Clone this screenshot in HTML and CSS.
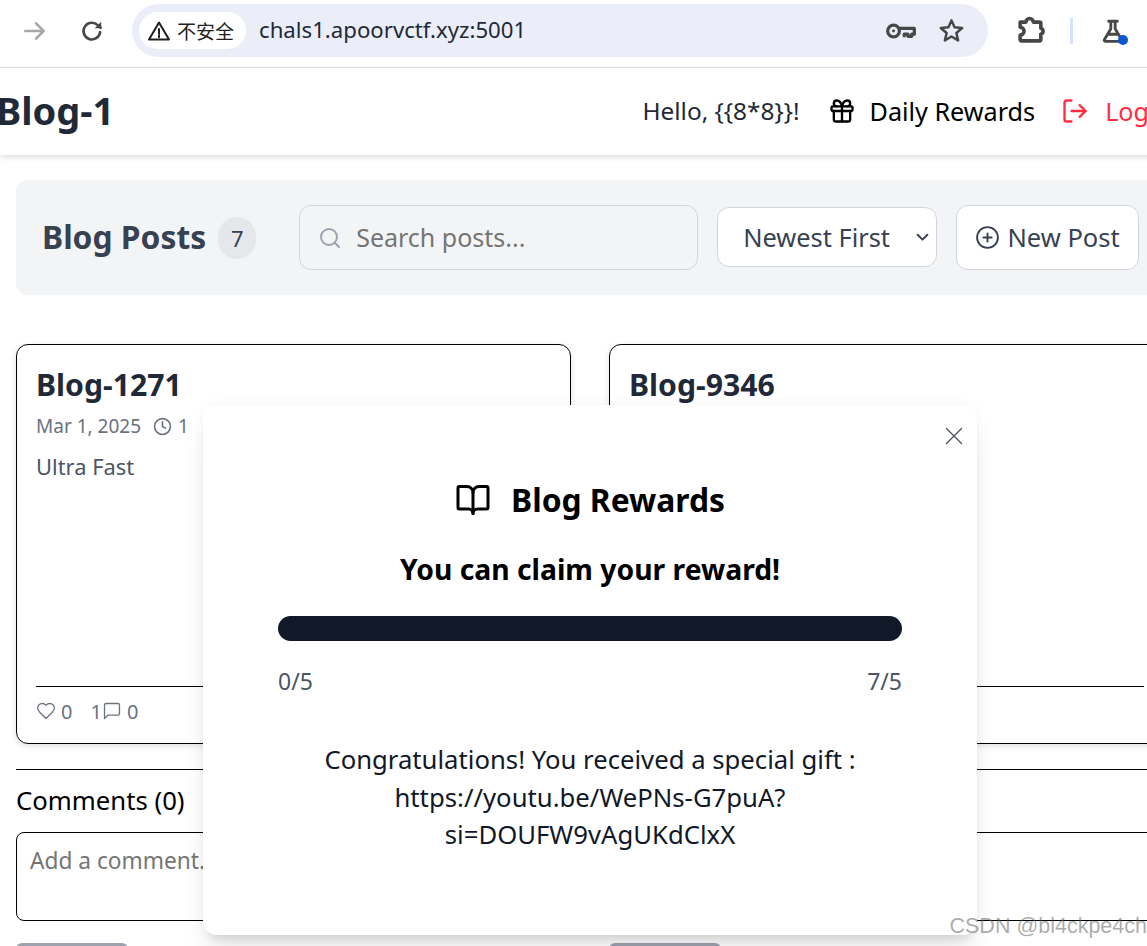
FILE: index.html
```html
<!DOCTYPE html>
<html lang="en">
<head>
  <meta charset="UTF-8" />
  <title>Blog-1</title>
  <link rel="stylesheet" href="styles.css">
</head>
<body>
  <!-- Browser toolbar -->
  <div class="browser-bar">
    <svg class="tool-icon back" viewBox="0 0 24 24"><path d="M3 12h17M13 5l7 7-7 7"/></svg>
    <svg class="tool-icon reload" viewBox="0 0 24 24"><path d="M19.5 13a7.7 7.7 0 1 1-2.2-6.4L20 9"/><path d="M20.5 3.5V9.5H14.5" class="solid"/></svg>
    <div class="omnibox">
      <div class="security-chip">
        <svg class="warn-icon" viewBox="0 0 24 24"><path d="M12 3.5 22 20.5H2Z"/><path d="M12 10v5M12 16.6v1.6"/></svg>
        <span>不安全</span>
      </div>
      <span class="url">chals1.apoorvctf.xyz:5001</span>
      <svg class="tool-icon key" viewBox="0 0 30 24"><circle cx="8" cy="12" r="5.5"/><circle cx="8" cy="12" r="1.4" class="solid"/><path d="M13.5 9.5H27.5V15H25V17H21.5V15H18V16.5"/></svg>
      <svg class="tool-icon star" viewBox="0 0 24 24"><path d="M12 3l2.7 6.2 6.8.6-5.2 4.4 1.6 6.6-5.9-3.5-5.900 3.500 1.600-6.600-5.200-4.400 6.800-.6Z"/></svg>
    </div>
    <svg class="tool-icon puzzle" viewBox="0 0 24 24"><path d="M4 5.500h4.500a2.800 2.800 0 0 1 5.600 0H19a1 1 0 0 1 1 1v3.700a2.400 2.400 0 0 1 0 4.600V19a1 1 0 0 1-1 1H5a1 1 0 0 1-1-1v-3.500a3 3 0 0 0 0-6Z"/></svg>
    <span class="bar-divider"></span>
    <div class="flask-wrap">
      <svg class="tool-icon flask" viewBox="0 0 24 24"><path d="M8 3h8M10 3v7L4 20a1 1 0 0 0 1 1.500h14a1 1 0 0 0 1-1.500L14 10V3M7.500 15h9"/></svg>
      <span class="flask-dot"></span>
    </div>
  </div>

  <div class="page">
    <nav class="navbar">
      <span class="brand">Blog-1</span>
      <div class="nav-links">
        <span class="hello">Hello, {{8*8}}!</span>
        <a class="nav-link"><svg class="icon icon-nav" viewBox="0 0 24 24"><rect x="3" y="8" width="18" height="4" rx="1"/><path d="M12 8v13"/><path d="M19 12v7a2 2 0 0 1-2 2H7a2 2 0 0 1-2-2v-7"/><path d="M7.500 8a2.500 2.500 0 0 1 0-5A4.800 8 0 0 1 12 8a4.800 8 0 0 1 4.500-5 2.500 2.500 0 0 1 0 5"/></svg>Daily Rewards</a>
        <a class="nav-link logout"><svg class="icon icon-nav" viewBox="0 0 24 24"><path d="M9 21H5a2 2 0 0 1-2-2V5a2 2 0 0 1 2-2h4"/><path d="M16 17l5-5-5-5"/><path d="M21 12H9"/></svg>Logout</a>
      </div>
    </nav>

    <main class="content">
      <section class="posts-header">
        <h2>Blog Posts</h2>
        <span class="count-badge">7</span>
        <div class="search-box">
          <svg class="icon icon-search" viewBox="0 0 24 24"><circle cx="11" cy="11" r="8"/><path d="M21 21l-4.300-4.300"/></svg>
          <input type="text" placeholder="Search posts...">
        </div>
        <div class="sort-box">
          <select><option>Newest First</option></select>
          <svg class="sort-arrow" viewBox="0 0 12 8"><path d="M1.500 1.500 6 6l4.500-4.500"/></svg>
        </div>
        <button class="new-post"><svg class="icon icon-plus" viewBox="0 0 24 24"><circle cx="12" cy="12" r="10"/><path d="M8 12h8M12 8v8"/></svg>New Post</button>
      </section>

      <section class="posts-grid">
        <div class="post-col">
          <article class="post-card">
            <h3>Blog-1271</h3>
            <div class="post-meta">Mar 1, 2025 <svg class="icon icon-clock" viewBox="0 0 24 24"><circle cx="12" cy="12" r="10"/><path d="M12 6v6l4 2"/></svg> 1</div>
            <p class="post-body">Ultra Fast</p>
            <div class="post-footer">
              <svg class="icon icon-small" viewBox="0 0 24 24"><path d="M19 14c1.490-1.460 3-3.210 3-5.500A5.500 5.500 0 0 0 16.500 3c-1.760 0-3 .5-4.500 2-1.500-1.500-2.740-2-4.500-2A5.500 5.500 0 0 0 2 8.500c0 2.300 1.500 4.050 3 5.500l7 7Z"/></svg>
              <span class="foot-num">0</span>
              <span class="foot-one">1</span>
              <svg class="icon icon-small" viewBox="0 0 24 24"><path d="M21 15a2 2 0 0 1-2 2H7l-4 4V5a2 2 0 0 1 2-2h14a2 2 0 0 1 2 2z"/></svg>
              <span class="foot-num">0</span>
            </div>
          </article>
          <div class="comments">
            <h4>Comments (0)</h4>
            <textarea placeholder="Add a comment..."></textarea>
            <button class="comment-btn"></button>
          </div>
        </div>
        <div class="post-col">
          <article class="post-card">
            <h3>Blog-9346</h3>
            <div class="post-meta">Mar 1, 2025 <svg class="icon icon-clock" viewBox="0 0 24 24"><circle cx="12" cy="12" r="10"/><path d="M12 6v6l4 2"/></svg> 1</div>
            <p class="post-body"></p>
            <div class="post-footer"></div>
          </article>
          <div class="comments">
            <h4></h4>
            <textarea></textarea>
            <button class="comment-btn"></button>
          </div>
        </div>
      </section>
    </main>
  </div>

  <!-- Rewards modal -->
  <div class="modal">
    <svg class="icon modal-close" viewBox="0 0 24 24"><path d="M21 3 3 21M3 3l18 18"/></svg>
    <h2 class="modal-title"><svg class="icon icon-book" viewBox="0 0 24 24"><path d="M12 7v14"/><path d="M3 18a1 1 0 0 1-1-1V4a1 1 0 0 1 1-1h5a4 4 0 0 1 4 4 4 4 0 0 1 4-4h5a1 1 0 0 1 1 1v13a1 1 0 0 1-1 1h-6a3 3 0 0 0-3 3 3 3 0 0 0-3-3z"/></svg>Blog Rewards</h2>
    <p class="modal-status">You can claim your reward!</p>
    <div class="progress"></div>
    <div class="progress-labels"><span>0/5</span><span>7/5</span></div>
    <p class="modal-gift">Congratulations! You received a special gift : https://youtu.be/WePNs-G7puA?si=DOUFW9vAgUKdClxX</p>
  </div>

  <div class="watermark">CSDN @bl4ckpe4ch</div>
</body>
</html>
```

FILE: styles.css
```css
html, body {
  margin: 0;
  height: 946px;
  overflow: hidden;
}
body {
  font-family: "Noto Sans", Arial, sans-serif;
  background: #fff;
  color: #111827;
  position: relative;
  width: 1147px;
}
svg {
  fill: none;
  stroke: currentColor;
  stroke-linecap: round;
  stroke-linejoin: round;
  flex-shrink: 0;
}
h2, h3, h4, p {
  margin: 0;
}

/* browser toolbar */
.browser-bar {
  height: 68px;
  box-sizing: border-box;
  border-bottom: 1px solid #e2e2e2;
  display: flex;
  align-items: center;
  padding: 5px 0 11px 22px;
}
.tool-icon {
  stroke: #474747;
  stroke-width: 2;
}
.tool-icon .solid {
  fill: #474747;
  stroke: none;
}
.back {
  width: 26px;
  height: 26px;
  stroke: #a8a8a8;
  stroke-width: 2.4;
  margin-right: 31px;
}
.reload {
  width: 26px;
  height: 26px;
  stroke-width: 2.4;
  margin-right: 27px;
}
.omnibox {
  width: 856px;
  height: 53px;
  border-radius: 27px;
  background: #ebeef8;
  display: flex;
  align-items: center;
  padding: 0 23px 0 7px;
  box-sizing: border-box;
}
.security-chip {
  width: 107px;
  height: 37px;
  border-radius: 19px;
  background: #fff;
  display: flex;
  align-items: center;
  gap: 6px;
  padding-left: 8px;
  box-sizing: border-box;
  font-family: "Noto Sans CJK SC", sans-serif;
  font-size: 19px;
  color: #1f1f1f;
}
.warn-icon {
  width: 24px;
  height: 24px;
  stroke: #1f1f1f;
  stroke-width: 2;
}
.url {
  margin-left: 13px;
  font-size: 22.2px;
  line-height: 30px;
  padding-bottom: 2px;
  color: #1f2937;
  flex: 1;
}
.key {
  width: 32px;
  height: 26px;
  stroke-width: 3;
  margin-right: 21px;
}
.star {
  width: 27px;
  height: 27px;
  stroke-width: 2.2;
}
.puzzle {
  width: 31px;
  height: 31px;
  stroke-width: 2.8;
  margin-left: 27px;
}
.bar-divider {
  width: 3px;
  height: 26px;
  background: #d3e3fd;
  margin-left: 24px;
}
.flask-wrap {
  position: relative;
  width: 26px;
  height: 26px;
  margin-left: 27px;
}
.flask {
  display: block;
  width: 26px;
  height: 26px;
  stroke-width: 2.6;
}
.flask-dot {
  position: absolute;
  right: -2px;
  bottom: -1px;
  width: 10px;
  height: 10px;
  border-radius: 50%;
  background: #0b57d0;
}

/* page */
.page {
  width: 1180px;
}
.navbar {
  height: 87px;
  display: flex;
  align-items: center;
  justify-content: space-between;
  box-shadow: 0 2px 6px rgba(0, 0, 0, 0.14);
  position: relative;
}
.brand {
  font-size: 38px;
  font-weight: 700;
  color: #1f2937;
  margin: -4px 0 0 -4px;
}
.nav-links {
  display: flex;
  align-items: center;
  font-size: 25.2px;
  margin: -2px -9px 0 0;
}
.hello {
  color: #1f2937;
  font-size: 24.4px;
  margin-right: 28px;
}
.nav-link {
  display: flex;
  align-items: center;
  gap: 14px;
  color: #000;
  margin-right: 26px;
}
.logout {
  color: #ff2d3f;
  gap: 16px;
  margin-right: 0;
}
.icon-nav {
  width: 28px;
  height: 28px;
  stroke-width: 2;
}

.content {
  padding: 25px 16px 0;
}
.posts-header {
  height: 115px;
  background: #f3f4f6;
  border-radius: 12px;
  display: flex;
  align-items: center;
  padding: 0 25px 0 26px;
}
.posts-header h2 {
  font-size: 31.8px;
  font-weight: 700;
  color: #374151;
  padding-bottom: 2px;
  white-space: nowrap;
}
.count-badge {
  width: 38px;
  height: 42px;
  margin-left: 12px;
  border-radius: 19px;
  background: #e5e7eb;
  color: #374151;
  font-size: 22px;
  display: flex;
  align-items: center;
  justify-content: center;
}
.search-box {
  width: 399px;
  height: 65px;
  margin-left: 43px;
  border: 1px solid #d1d5db;
  border-radius: 12px;
  display: flex;
  align-items: center;
  box-sizing: border-box;
  padding-left: 18px;
  gap: 14px;
}
.icon-search {
  width: 24px;
  height: 24px;
  color: #9ca3af;
  stroke-width: 2;
}
.search-box input {
  border: 0;
  outline: 0;
  background: transparent;
  font: inherit;
  font-size: 25px;
  flex: 1;
  min-width: 0;
  padding: 0 0 2px;
}
input::placeholder, textarea::placeholder {
  color: #757575;
  opacity: 1;
}
.sort-box {
  position: relative;
  margin: 0 0 1px 19px;
}
.sort-box select {
  appearance: none;
  display: block;
  width: 220px;
  height: 60px;
  box-sizing: border-box;
  border: 1px solid #d1d5db;
  border-radius: 12px;
  background: #fff;
  color: #374151;
  font: inherit;
  font-size: 25.4px;
  padding: 0 0 1px 25px;
}
.sort-arrow {
  position: absolute;
  right: 8px;
  top: 26px;
  width: 13px;
  height: 9px;
  color: #374151;
  stroke-width: 1.8;
}
.new-post {
  width: 183px;
  height: 65px;
  margin-left: 19px;
  box-sizing: border-box;
  border: 1px solid #d1d5db;
  border-radius: 12px;
  background: #fff;
  color: #374151;
  font: inherit;
  font-size: 25.5px;
  display: flex;
  align-items: center;
  justify-content: center;
  gap: 7px;
  padding: 0 0 2px;
}
.icon-plus {
  width: 25px;
  height: 25px;
  stroke-width: 1.8;
  margin-top: 2px;
}

.posts-grid {
  display: grid;
  grid-template-columns: 555px 555px;
  column-gap: 38px;
  margin-top: 49px;
}
.post-card {
  height: 400px;
  box-sizing: border-box;
  border: 1px solid #000;
  border-radius: 12px;
  padding: 20px 19px 0;
  display: flex;
  flex-direction: column;
  box-shadow: 0 2px 6px rgba(0, 0, 0, 0.12);
}
.post-card h3 {
  font-size: 30.2px;
  font-weight: 700;
  color: #1f2937;
  line-height: 40px;
}
.post-meta {
  margin-top: 8px;
  font-size: 19px;
  color: #6b7280;
  display: flex;
  align-items: center;
  gap: 6px;
  white-space: nowrap;
}
.icon-clock {
  width: 19px;
  height: 19px;
  margin-left: 6px;
  stroke-width: 2;
}
.post-body {
  margin-top: 13px;
  font-size: 21.9px;
  color: #4b5563;
  flex: 1;
}
.post-footer {
  height: 57px;
  padding-bottom: 8px;
  box-sizing: border-box;
  border-top: 1px solid #000;
  display: flex;
  align-items: center;
  font-size: 20px;
  color: #6b7280;
}
.icon-small {
  width: 20px;
  height: 20px;
  stroke-width: 1.6;
}
.foot-num {
  margin-left: 5px;
}
.foot-one {
  margin-left: 18px;
}
.comments {
  margin-top: 25px;
  border-top: 1px solid #000;
}
.comments h4 {
  margin-top: 14px;
  height: 34px;
  font-size: 25.7px;
  font-weight: 400;
  color: #000;
  line-height: 34px;
}
.comments textarea {
  display: block;
  width: 100%;
  height: 89px;
  margin-top: 14px;
  box-sizing: border-box;
  border: 1px solid #000;
  border-radius: 8px;
  padding: 12px 13px;
  font: inherit;
  font-size: 22.7px;
  resize: none;
}
.comment-btn {
  display: block;
  width: 112px;
  height: 40px;
  margin-top: 22px;
  border: 0;
  border-radius: 6px;
  background: #9ca3af;
}

/* rewards modal */
.modal {
  position: absolute;
  left: 203px;
  top: 405px;
  width: 774px;
  height: 530px;
  box-sizing: border-box;
  padding: 72px 75px 0;
  background: #fff;
  border-radius: 14px;
  box-shadow: 0 20px 25px -5px rgba(0, 0, 0, 0.1), 0 8px 10px -6px rgba(0, 0, 0, 0.1), 0 0 14px rgba(0, 0, 0, 0.04);
  text-align: center;
}
.modal-close {
  position: absolute;
  right: 13px;
  top: 21px;
  width: 20px;
  height: 20px;
  color: #4b5563;
  stroke-width: 1.6;
}
.modal-title {
  display: flex;
  align-items: center;
  justify-content: center;
  gap: 20px;
  font-size: 31.8px;
  font-weight: 700;
  color: #000;
  line-height: 46px;
}
.icon-book {
  width: 36px;
  height: 36px;
  stroke-width: 2;
}
.modal-status {
  margin-top: 27px;
  font-size: 28.3px;
  font-weight: 700;
  color: #000;
  line-height: 38px;
}
.progress {
  height: 25px;
  margin-top: 28px;
  border-radius: 13px;
  background: #111827;
}
.progress-labels {
  display: flex;
  justify-content: space-between;
  margin-top: 25px;
  font-size: 23px;
  line-height: 30px;
  color: #4b5563;
}
.modal-gift {
  width: 560px;
  margin: 45px auto 0;
  font-size: 25.7px;
  line-height: 37.5px;
  color: #111827;
}
.watermark {
  position: absolute;
  right: 0;
  top: 914px;
  font-family: "Liberation Sans", Arial, sans-serif;
  font-size: 21.5px;
  color: rgba(90, 90, 90, 0.5);
  white-space: nowrap;
}
```
